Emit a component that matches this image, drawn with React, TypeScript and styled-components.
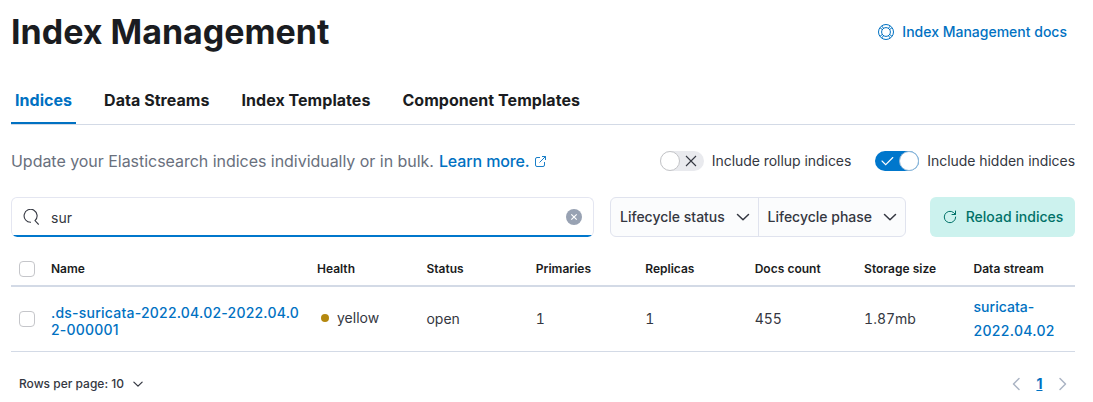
import React from "react";
import styled, { createGlobalStyle } from "styled-components";

const GlobalStyle = createGlobalStyle`
  *, *::before, *::after { box-sizing: border-box; }
  body {
    margin: 0;
    background: #fff;
    color: #343741;
    font-family: Inter, "Liberation Sans", sans-serif;
    font-size: 14px;
    line-height: 24px;
    overflow: hidden;
  }
  button, input { font-family: inherit; }
  svg { display: block; flex: none; fill: none; }
`;

const Page = styled.main`
  width: 1093px;
  height: 402px;
  padding: 12px 18px 0 11px;
`;

const Header = styled.header`
  display: flex;
  align-items: center;
  justify-content: space-between;
  height: 40px;
`;

const Title = styled.h1`
  margin: 0;
  color: #1a1c21;
  font-size: 34px;
  font-weight: 700;
  line-height: 40px;
`;

const DocsLink = styled.a`
  display: flex;
  align-items: center;
  gap: 8px;
  padding-right: 8px;
  color: #0071c2;
  font-weight: 500;
`;

const Tabs = styled.nav`
  display: flex;
  gap: 24px;
  height: 49px;
  margin-top: 24px;
  border-bottom: 1px solid #d3dae6;
`;

const Tab = styled.a<{ $active?: boolean }>`
  height: 48px;
  padding: 0 4px;
  border-bottom: 2px solid ${(p) => (p.$active ? "#0071c2" : "transparent")};
  color: ${(p) => (p.$active ? "#0071c2" : "#1a1c21")};
  font-size: 16px;
  font-weight: 700;
  letter-spacing: 0.043px;
  line-height: 48px;
`;

const Intro = styled.div`
  display: flex;
  align-items: center;
  height: 24px;
  margin-top: 24px;
`;

const Description = styled.p`
  display: flex;
  align-items: center;
  flex: 1;
  margin: 0;
  color: #69707d;
  font-size: 16px;
  letter-spacing: -0.035px;
`;

const LearnMore = styled.a`
  display: flex;
  align-items: center;
  gap: 5px;
  margin-left: 5px;
  color: #0071c2;
  font-weight: 500;
  letter-spacing: -0.12px;
`;

const Switches = styled.div`
  display: flex;
  gap: 24px;
`;

const SwitchField = styled.label`
  display: flex;
  align-items: center;
  gap: 8px;
  letter-spacing: -0.047px;
  line-height: 20px;
`;

const Track = styled.span<{ $on?: boolean }>`
  display: flex;
  flex-direction: ${(p) => (p.$on ? "row-reverse" : "row")};
  align-items: center;
  width: 44px;
  height: 20px;
  border-radius: 20px;
  background: ${(p) => (p.$on ? "#0077cc" : "#e9eaee")};
`;

const Thumb = styled.span<{ $on?: boolean }>`
  width: 20px;
  height: 20px;
  border: 1px solid ${(p) => (p.$on ? "#94b9d8" : "#c3c4c7")};
  border-radius: 50%;
  background: #fff;
`;

const TrackIcon = styled.span`
  display: flex;
  flex: 1;
  justify-content: center;
  padding-right: 1px;
`;

const Toolbar = styled.div`
  display: flex;
  height: 40px;
  margin-top: 24px;
`;

const SearchBox = styled.div`
  display: flex;
  align-items: center;
  width: 583px;
  padding: 0 11px 1px;
  border: 1px solid #e4e6f1;
  border-bottom: 0;
  border-radius: 6px;
  background: linear-gradient(to top, #0077cc 2px, transparent 2px);
`;

const SearchInput = styled.input`
  flex: 1;
  min-width: 0;
  padding: 1px 0 0;
  margin: 0 0 0 12px;
  border: 0;
  outline: 0;
  background: transparent;
  color: #343741;
  font-size: 14px;
`;

const FilterGroup = styled.div`
  display: flex;
  width: 296px;
  margin-left: 16px;
  border: 1px solid #e0e3ee;
  border-radius: 6px;
  background: #fbfcfd;
  overflow: hidden;
`;

const ButtonText = styled.span`
  padding-bottom: 1px;
  line-height: 19px;
`;

const FilterButton = styled.button`
  display: flex;
  align-items: center;
  justify-content: space-between;
  flex: 1;
  padding: 0 7px 0 9px;
  border: 0;
  background: transparent;
  color: #343741;
  font-size: 14px;
  font-weight: 500;
  white-space: nowrap;

  & + & { border-left: 1px solid #e0e3ee; }
`;

const ReloadButton = styled.button`
  display: flex;
  align-items: center;
  justify-content: center;
  gap: 8px;
  width: 145px;
  margin-left: 24px;
  padding: 0;
  border: 0;
  border-radius: 6px;
  background: #ccf2ee;
  color: #007168;
  font-size: 14px;
  font-weight: 500;
`;

const Table = styled.table`
  width: 1064px;
  margin-top: 12px;
  border-collapse: separate;
  border-spacing: 0;
  font-variant-numeric: tabular-nums;
  table-layout: fixed;
`;

const HeadCell = styled.th<{ $width?: string }>`
  width: ${(p) => p.$width ?? "auto"};
  height: 38px;
  padding: 4px 8px 0;
  border-bottom: 2px solid #d3dae6;
  color: #1a1c21;
  font-size: 12px;
  font-weight: 600;
  line-height: 18px;
  text-align: left;
`;

const Cell = styled.td`
  height: 65px;
  padding: 0 8px;
  border-bottom: 1px solid #d3dae6;
`;

const Checkbox = styled.span`
  display: block;
  width: 16px;
  height: 16px;
  border: 1px solid #c5c6ca;
  border-radius: 4px;
  background: #fff;
`;

const IndexLink = styled.a`
  display: block;
  padding-top: 3px;
  color: #0071c2;
  font-size: 14px;
  font-variant-numeric: normal;
  font-weight: 500;
  letter-spacing: 0.225px;
  line-height: 17px;
  word-break: break-all;
`;

const StreamLink = styled.a`
  display: block;
  color: #0071c2;
  font-variant-numeric: normal;
  font-weight: 500;
  letter-spacing: 0.02px;
`;

const StreamDate = styled.span`
  letter-spacing: 0.32px;
`;

const Health = styled.span`
  display: flex;
  align-items: center;
  gap: 8px;
  padding: 0 0 2px 4px;

  &::before {
    width: 8px;
    height: 8px;
    border-radius: 50%;
    background: #b4880f;
    content: "";
  }
`;

const Footer = styled.footer`
  display: flex;
  align-items: center;
  justify-content: space-between;
  height: 24px;
  margin-top: 20px;
  padding: 0 6px 0 8px;
`;

const RowsPerPage = styled.button`
  display: flex;
  align-items: center;
  gap: 8px;
  padding: 0;
  border: 0;
  background: transparent;
  color: #343741;
  font-size: 12px;
  font-weight: 500;
`;

const Pager = styled.div`
  display: flex;
  align-items: center;
  gap: 14.5px;
`;

const CurrentPage = styled.span`
  color: #0071c2;
  font-weight: 700;
  text-decoration: underline;
`;

const ChevronDown = ({ size = 16, weight = 1.5 }) => (
  <svg width={size} height={size} viewBox="0 0 16 16" stroke="currentColor" strokeWidth={weight} strokeLinecap="round" strokeLinejoin="round">
    <path d="M2.500 5.500 8 10.800l5.500-5.300" />
  </svg>
);

const HelpIcon = () => (
  <svg width="16" height="16" viewBox="0 0 16 16" stroke="currentColor">
    <circle cx="8" cy="8" r="7.500" />
    <circle cx="8" cy="8" r="4.400" />
    <path d="M2.200 4 4.800 5.800M4 2.200 5.800 4.800M13.800 4l-2.600 1.800M12 2.200l-1.800 2.600M2.200 12l2.600-1.800M4 13.800l1.800-2.600M13.800 12l-2.600-1.800M12 13.800l-1.800-2.600" />
  </svg>
);

const PopoutIcon = () => (
  <svg width="12" height="12" viewBox="0 0 12 12" stroke="currentColor" strokeWidth="0.900">
    <path d="M5 2.500H2A1.500 1.500 0 0 0 .5 4V10A1.500 1.500 0 0 0 2 11.500h6A1.500 1.500 0 0 0 9.500 10V7M4.500 7.500l6-6M7 1.500h3.500V5" />
  </svg>
);

const SearchIcon = () => (
  <svg width="16" height="16" viewBox="0 0 16 16" stroke="#343741" strokeWidth="1.100">
    <path d="M8 13.300A6.500 6.500 0 1 1 12 11.600L15.700 15.500" />
  </svg>
);

const ClearIcon = () => (
  <svg width="16" height="16" viewBox="0 0 16 16">
    <circle cx="8" cy="8" r="8" fill="#98a2b3" />
    <path d="m5.300 5.300 5.400 5.400m0-5.400-5.400 5.400" stroke="#fff" strokeWidth="1.200" />
  </svg>
);

const RefreshIcon = () => (
  <svg width="16" height="16" viewBox="0 0 16 16" stroke="currentColor" strokeLinecap="round">
    <path d="M13.700 8a5.700 5.700 0 1 1-2.100-4.400l1.900 1.900M13.500 2v3.500H10" />
  </svg>
);

const CrossIcon = () => (
  <svg width="12" height="12" viewBox="0 0 12 12" stroke="#343741" strokeWidth="1.100">
    <path d="m1 1 10 10M11 1 1 11" />
  </svg>
);

const CheckIcon = () => (
  <svg width="14" height="12" viewBox="0 0 14 12" stroke="#fff" strokeWidth="1.100" strokeLinecap="round">
    <path d="m2 6 3.700 3.700L12.800 2.500" />
  </svg>
);

const PageArrow = ({ next = false }) => (
  <svg width="12" height="16" viewBox="0 0 12 16" stroke="#abb4c4" strokeWidth="1.500" strokeLinecap="round" strokeLinejoin="round">
    <path d={next ? "m3 2.500 5.500 5.500L3 13.500" : "M9 2.500 3.500 8 9 13.500"} />
  </svg>
);

const columns = ["Health", "Status", "Primaries", "Replicas", "Docs count", "Storage size", "Data stream"];

export default function App() {
  return (
    <Page>
      <GlobalStyle />
      <Header>
        <Title>Index Management</Title>
        <DocsLink><HelpIcon />Index Management docs</DocsLink>
      </Header>
      <Tabs>
        <Tab $active>Indices</Tab>
        <Tab>Data Streams</Tab>
        <Tab>Index Templates</Tab>
        <Tab>Component Templates</Tab>
      </Tabs>
      <Intro>
        <Description>
          Update your Elasticsearch indices individually or in bulk.
          <LearnMore>Learn more. <PopoutIcon /></LearnMore>
        </Description>
        <Switches>
          <SwitchField>
            <Track><Thumb /><TrackIcon><CrossIcon /></TrackIcon></Track>
            Include rollup indices
          </SwitchField>
          <SwitchField>
            <Track $on><Thumb $on /><TrackIcon><CheckIcon /></TrackIcon></Track>
            Include hidden indices
          </SwitchField>
        </Switches>
      </Intro>
      <Toolbar>
        <SearchBox>
          <SearchIcon />
          <SearchInput defaultValue="sur" />
          <ClearIcon />
        </SearchBox>
        <FilterGroup>
          <FilterButton><ButtonText>Lifecycle status</ButtonText><ChevronDown /></FilterButton>
          <FilterButton><ButtonText>Lifecycle phase</ButtonText><ChevronDown /></FilterButton>
        </FilterGroup>
        <ReloadButton><RefreshIcon /><ButtonText>Reload indices</ButtonText></ReloadButton>
      </Toolbar>
      <Table>
        <thead>
          <tr>
            <HeadCell $width="32px"><Checkbox /></HeadCell>
            <HeadCell $width="266px">Name</HeadCell>
            {columns.map((name) => <HeadCell key={name}>{name}</HeadCell>)}
          </tr>
        </thead>
        <tbody>
          <tr>
            <Cell><Checkbox /></Cell>
            <Cell><IndexLink>.ds-suricata-2022.04.02-2022.04.02-000001</IndexLink></Cell>
            <Cell><Health>yellow</Health></Cell>
            <Cell>open</Cell>
            <Cell>1</Cell>
            <Cell>1</Cell>
            <Cell>455</Cell>
            <Cell>1.87mb</Cell>
            <Cell><StreamLink>suricata-<StreamDate>2022.04.02</StreamDate></StreamLink></Cell>
          </tr>
        </tbody>
      </Table>
      <Footer>
        <RowsPerPage><ButtonText>Rows per page: 10</ButtonText><ChevronDown size={12} weight={1.700} /></RowsPerPage>
        <Pager><PageArrow /><CurrentPage>1</CurrentPage><PageArrow next /></Pager>
      </Footer>
    </Page>
  );
}
